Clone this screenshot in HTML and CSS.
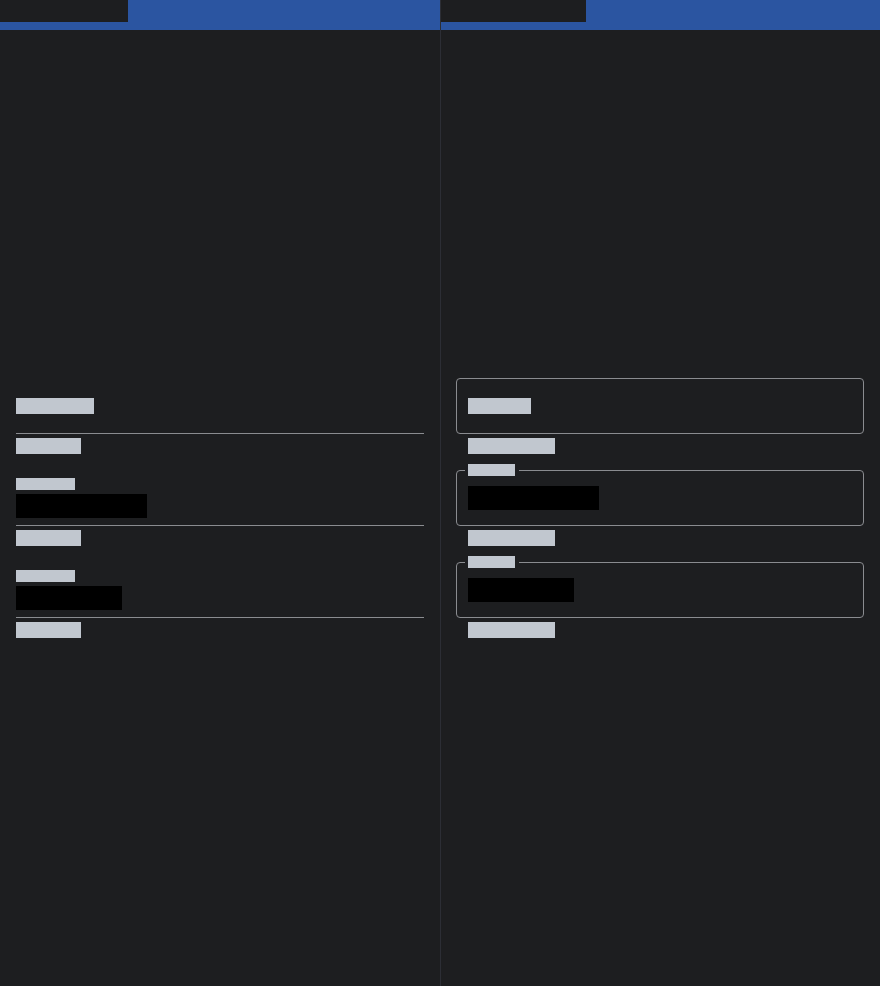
FILE: index.html
```html
<!DOCTYPE html>
<html lang="en">
<head>
    <meta charset="UTF-8">
    <meta name="viewport" content="width=device-width, initial-scale=1.0">
    <title>Text Fields</title>
    <link rel="stylesheet" href="styles.css">
</head>
<body>
    <div class="app">
        <section class="pane">
            <div class="tabbar"><div class="tab"></div></div>
            <div class="fields">
                <div class="group">
                    <div class="filled-box">
                        <span class="txt txt-md w-label"><span class="t">Label</span></span>
                    </div>
                    <span class="txt txt-md helper w-help"><span class="t">Helper</span></span>
                </div>
                <div class="group">
                    <div class="filled-box has-value">
                        <span class="txt txt-sm w-label"><span class="t">Label</span></span>
                        <span class="txt txt-lg value w-value-a"><span class="t">Some value</span></span>
                    </div>
                    <span class="txt txt-md helper w-help"><span class="t">Helper</span></span>
                </div>
                <div class="group">
                    <div class="filled-box has-value">
                        <span class="txt txt-sm w-label"><span class="t">Label</span></span>
                        <span class="txt txt-lg value w-value-b"><span class="t">Value</span></span>
                    </div>
                    <span class="txt txt-md helper w-help"><span class="t">Helper</span></span>
                </div>
            </div>
        </section>

        <section class="pane pane-outlined">
            <div class="tabbar"><div class="tab"></div></div>
            <div class="fields">
                <div class="group">
                    <div class="outlined-box">
                        <span class="txt txt-md w-label-o"><span class="t">Name</span></span>
                    </div>
                    <span class="txt txt-md helper-o w-help-o"><span class="t">Helper text</span></span>
                </div>
                <div class="group">
                    <div class="outlined-box has-value">
                        <span class="notch"><span class="txt txt-sm w-label-o"><span class="t">Name</span></span></span>
                        <span class="txt txt-lg w-value-a"><span class="t">Some value</span></span>
                    </div>
                    <span class="txt txt-md helper-o w-help-o"><span class="t">Helper text</span></span>
                </div>
                <div class="group">
                    <div class="outlined-box has-value">
                        <span class="notch"><span class="txt txt-sm w-label-o"><span class="t">Name</span></span></span>
                        <span class="txt txt-lg w-value-b"><span class="t">Value</span></span>
                    </div>
                    <span class="txt txt-md helper-o w-help-o"><span class="t">Helper text</span></span>
                </div>
            </div>
        </section>
    </div>
</body>
</html>
```

FILE: styles.css
```css
body {
    margin: 0;
    background: #1d1e20;
    font-family: 'Roboto', 'Liberation Sans', sans-serif;
}

.app {
    display: flex;
    min-height: 100vh;
}

.pane {
    width: 440px;
    box-sizing: border-box;
}

.pane-outlined {
    border-left: 1px solid #2c2e35;
}

.tabbar {
    height: 30px;
    background: #2b55a1;
}

.tab {
    width: 128px;
    height: 22px;
    background: #1d1e20;
}

.pane-outlined .tab {
    width: 145px;
}

.fields {
    padding: 348px 16px 0;
    display: flex;
    flex-direction: column;
    gap: 16px;
}

.pane-outlined .fields {
    padding-left: 15px;
}

.group {
    display: flex;
    flex-direction: column;
    align-items: flex-start;
}

/* text is drawn as solid blocks, like the test font */
.txt {
    display: block;
    height: 1em;
    color: #c1c7cf;
    background: #c1c7cf;
}

.txt .t {
    display: block;
    font-size: 0.6em;
    line-height: 1.6;
    white-space: nowrap;
}

.txt-sm { font-size: 12px; }
.txt-md { font-size: 16px; }
.txt-lg {
    font-size: 24px;
    color: #000;
    background: #000;
}

.w-label { width: 4.875em; }
.w-help { width: 4.0625em; }
.w-label-o { width: 3.95em; }
.w-help-o { width: 5.4375em; }
.w-value-a { width: 5.46em; }
.w-value-b { width: 4.42em; }

.filled-box {
    align-self: stretch;
    height: 56px;
    box-sizing: border-box;
    padding-top: 20px;
    border-bottom: 1px solid #8a8c90;
}

.filled-box.has-value {
    padding-top: 8px;
}

.filled-box .value {
    margin-top: 4px;
}

.helper {
    margin-top: 4px;
}

.outlined-box {
    position: relative;
    align-self: stretch;
    height: 56px;
    box-sizing: border-box;
    padding: 19px 11px 0;
    border: 1px solid #8a8c90;
    border-radius: 4px;
}

.outlined-box.has-value {
    padding-top: 15px;
}

.notch {
    position: absolute;
    top: -7px;
    left: 8px;
    padding: 0 4px 0 3px;
    background: #1d1e20;
}

.helper-o {
    margin-top: 4px;
    margin-left: 12px;
}
```
